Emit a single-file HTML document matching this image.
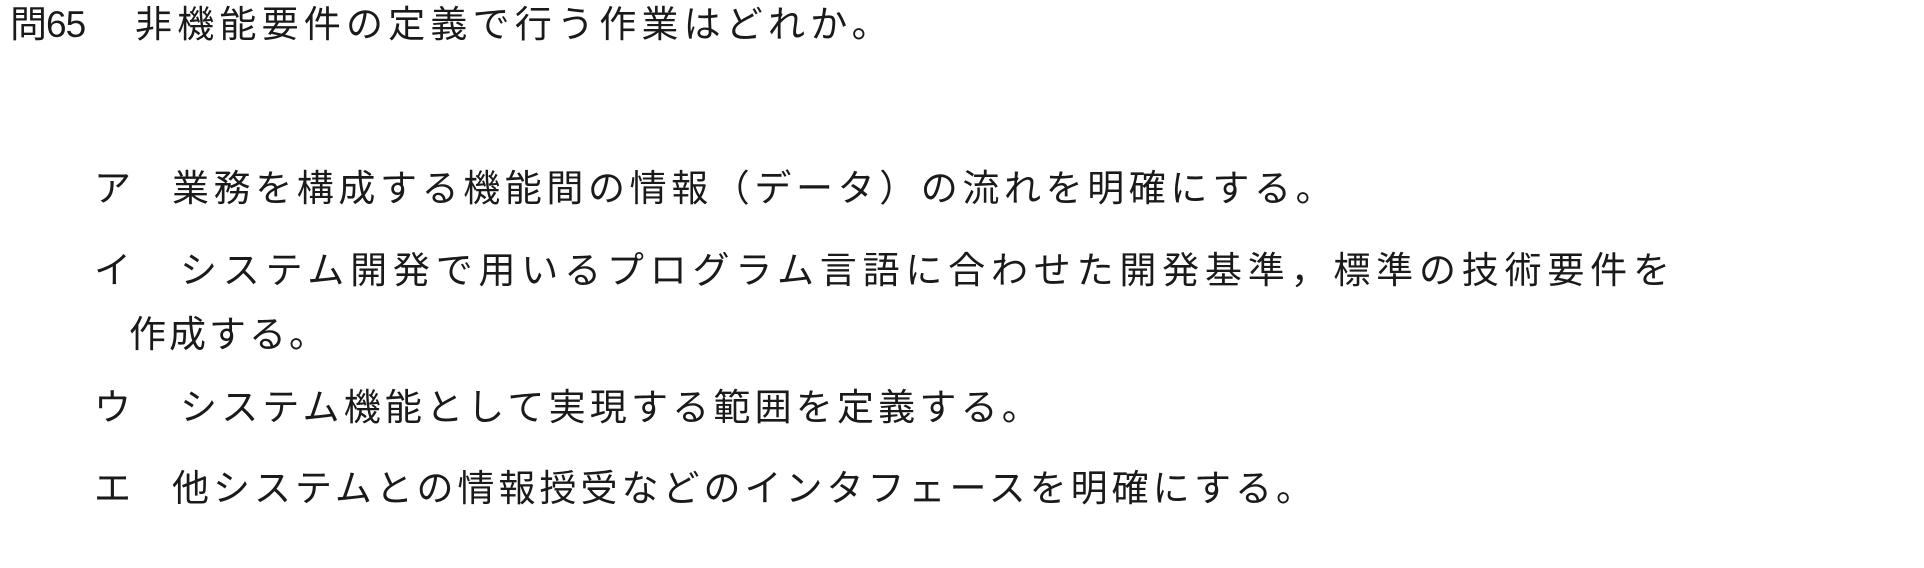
<!DOCTYPE html>
<html><head><meta charset="utf-8"><style>
html,body{margin:0;padding:0;background:#fff;width:1924px;height:568px;overflow:hidden}
.l{position:absolute;white-space:nowrap;font-family:"Liberation Sans","Noto Sans CJK JP",sans-serif;font-size:37px;line-height:37px;color:#1a1a1a;font-weight:400}
</style></head><body>
<div class="l" style="left:10px;top:6px;font-size:37px;line-height:37px;letter-spacing:-1px">問65</div>
<div class="l" style="left:135px;top:6px;font-size:37px;line-height:37px;letter-spacing:5.2px">非機能要件の定義で行う作業はどれか。</div>

<div class="l" style="left:94px;top:170px">ア</div>
<div class="l" style="left:172px;top:170px;letter-spacing:4.6px">業務を構成する機能間の情報（データ）の流れを明確にする。</div>

<div class="l" style="left:94px;top:252px">イ</div>
<div class="l" style="left:180px;top:252px;letter-spacing:5.8px">システム開発で用いるプログラム言語に合わせた開発基準，標準の技術要件を</div>

<div class="l" style="left:129px;top:316px;letter-spacing:3px">作成する。</div>

<div class="l" style="left:94px;top:389px">ウ</div>
<div class="l" style="left:180px;top:389px;letter-spacing:4.2px">システム機能として実現する範囲を定義する。</div>

<div class="l" style="left:94px;top:470px">エ</div>
<div class="l" style="left:172px;top:470px;letter-spacing:4px">他システムとの情報授受などのインタフェースを明確にする。</div>
</body></html>
